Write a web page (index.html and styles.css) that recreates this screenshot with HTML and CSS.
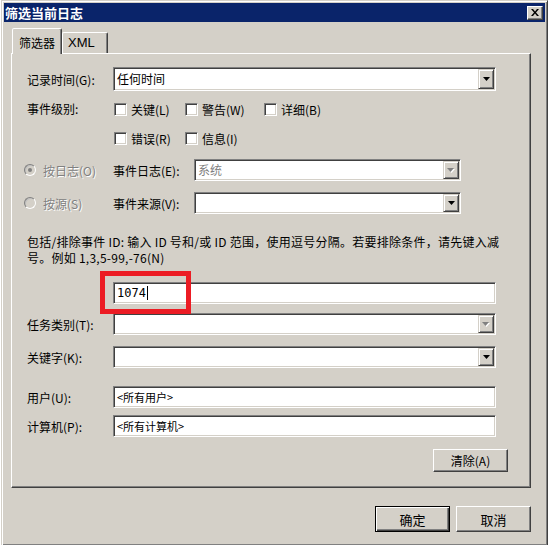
FILE: index.html
```html
<!DOCTYPE html>
<html lang="zh-CN">
<head>
<meta charset="UTF-8" />
<title>筛选当前日志</title>
<link rel="stylesheet" href="styles.css">
</head>
<body>

<div class="dialog">
  <!-- Title bar -->
  <div class="titlebar">
    <span class="title">筛选当前日志</span>
    <span class="close-btn">
      <svg width="8" height="7" viewBox="0 0 8 7"><path d="M0 0h2l2 2.5L6 0h2L5 3.5 8 7H6L4 4.5 2 7H0l3-3.5z" fill="#000"/></svg>
    </span>
  </div>

  <!-- Tabs -->
  <div class="tabs">
    <div class="tab active">筛选器</div>
    <div class="tab">XML</div>
  </div>

  <div class="panel">
    <div class="row row-time">
      <span class="lbl">记录时间(G):</span>
      <div class="field combo wide">
        <span class="val">任何时间</span>
        <span class="drop"><svg width="7" height="4" viewBox="0 0 7 4"><path d="M0 0h7L3.5 4z" fill="#000"/></svg></span>
      </div>
    </div>

    <div class="row row-level">
      <span class="lbl">事件级别:</span>
      <div class="checks">
        <span class="check"><i class="box"></i>关键(L)</span>
        <span class="check"><i class="box"></i>警告(W)</span>
        <span class="check"><i class="box"></i>详细(B)</span>
        <span class="check"><i class="box"></i>错误(R)</span>
        <span class="check"><i class="box"></i>信息(I)</span>
      </div>
    </div>

    <div class="row row-log">
      <span class="radio-wrap"><i class="radio checked"></i><span class="dim">按日志(O)</span></span>
      <span class="lbl2">事件日志(E):</span>
      <div class="field combo narrow">
        <span class="val dimval">系统</span>
        <span class="drop"><svg width="8" height="5" viewBox="0 0 8 5"><path d="M1 1h7L4.5 5z" fill="#fff"/><path d="M0 0h7L3.5 4z" fill="#808080"/></svg></span>
      </div>
    </div>

    <div class="row row-src">
      <span class="radio-wrap"><i class="radio"></i><span class="dim">按源(S)</span></span>
      <span class="lbl2">事件来源(V):</span>
      <div class="field combo narrow">
        <span class="val"></span>
        <span class="drop"><svg width="7" height="4" viewBox="0 0 7 4"><path d="M0 0h7L3.5 4z" fill="#000"/></svg></span>
      </div>
    </div>

    <p class="hint">包括/排除事件 ID: 输入 ID 号和/或 ID 范围，使用逗号分隔。若要排除条件，请先键入减<br>号。例如 1,3,5-99,-76(N)</p>

    <div class="row row-id">
      <span class="lbl"></span>
      <div class="field wide"><span class="val mono">1074<i class="caret"></i></span></div>
      <span class="mark"></span>
    </div>

    <div class="row row-task">
      <span class="lbl">任务类别(T):</span>
      <div class="field combo wide">
        <span class="val"></span>
        <span class="drop"><svg width="8" height="5" viewBox="0 0 8 5"><path d="M1 1h7L4.5 5z" fill="#fff"/><path d="M0 0h7L3.5 4z" fill="#808080"/></svg></span>
      </div>
    </div>

    <div class="row row-key">
      <span class="lbl">关键字(K):</span>
      <div class="field combo wide">
        <span class="val"></span>
        <span class="drop"><svg width="7" height="4" viewBox="0 0 7 4"><path d="M0 0h7L3.5 4z" fill="#000"/></svg></span>
      </div>
    </div>

    <div class="row row-user">
      <span class="lbl">用户(U):</span>
      <div class="field wide"><span class="val small">&lt;所有用户&gt;</span></div>
    </div>

    <div class="row row-pc">
      <span class="lbl">计算机(P):</span>
      <div class="field wide"><span class="val small">&lt;所有计算机&gt;</span></div>
    </div>

    <div class="row row-clear">
      <button class="btn clear">清除(A)</button>
    </div>
  </div>

  <div class="footer">
    <button class="btn default">确定</button>
    <button class="btn">取消</button>
  </div>
</div>

</body>
</html>
```

FILE: styles.css
```css
* {
  box-sizing: border-box;
  margin: 0;
  padding: 0;
}
body {
  background: #fff;
  font-family: "Noto Sans CJK SC", "Liberation Sans", sans-serif;
  font-size: 12px;
  color: #000;
  overflow: hidden;
}
.dialog {
  width: 547px;
  height: 546px;
  margin-left: 1px;
  background: #d4d0c8;
  border: 1px solid;
  border-color: #d4d0c8 #404040 #404040 #d4d0c8;
  box-shadow: inset 1px 1px #fff, inset -1px -1px #808080;
  padding: 2px;
}
.titlebar {
  height: 19px;
  background: #0a246a;
  display: flex;
  align-items: center;
  justify-content: space-between;
  padding: 0 2px 0 1px;
}
.title {
  color: #fff;
  font-weight: bold;
  font-size: 13px;
  line-height: 19px;
}
.close-btn {
  width: 16px;
  height: 14px;
  background: #d4d0c8;
  border: 1px solid;
  border-color: #fff #404040 #404040 #fff;
  box-shadow: inset -1px -1px #808080;
  display: flex;
  align-items: center;
  justify-content: center;
}
.tabs {
  display: flex;
  align-items: flex-end;
  padding: 6px 0 0 8px;
  height: 31px;
}
.tab {
  height: 21px;
  padding: 0 10px 0 5px;
  width: 46px;
  border: 1px solid;
  border-bottom: none;
  border-color: #fff #404040 transparent #fff;
  box-shadow: inset -1px 0 #808080;
  border-radius: 2px 2px 0 0;
  line-height: 19px;
  font-size: 13px;
  font-family: "Liberation Sans", sans-serif;
}
.tab.active {
  height: 26px;
  width: 50px;
  margin-bottom: -1px;
  background: #d4d0c8;
  position: relative;
  z-index: 1;
  padding: 4px 0 0 6px;
  font-family: "Noto Sans CJK SC", sans-serif;
  font-size: 12px;
}
.panel {
  margin-left: 7px;
  width: 520px;
  height: 435px;
  border: 1px solid;
  border-color: #fff #404040 #404040 #fff;
  box-shadow: inset -1px -1px #808080;
  padding: 13px 34px 0 15px;
}
.row {
  display: flex;
  align-items: center;
}
.lbl {
  width: 86px;
  flex: none;
}
.lbl2 {
  width: 81px;
  flex: none;
}
.field {
  height: 22px;
  background: #fff;
  border: 1px solid;
  border-color: #808080 #fff #fff #808080;
  box-shadow: inset 1px 1px #404040, inset -1px -1px #d4d0c8;
  padding: 1px;
  display: flex;
  align-items: center;
}
.wide {
  width: 383px;
}
.narrow {
  width: 267px;
}
.val {
  flex: 1;
  padding-left: 2px;
  line-height: 18px;
  white-space: nowrap;
}
.val.small {
  font-size: 11px;
}
.val.mono {
  font-family: "DejaVu Sans Mono", monospace;
  font-size: 12px;
  display: flex;
  align-items: center;
}
.caret {
  display: inline-block;
  width: 1px;
  height: 14px;
  background: #000;
  margin-left: 1px;
}
.dimval {
  color: #808080;
}
.drop {
  width: 16px;
  height: 100%;
  background: #d4d0c8;
  border: 1px solid;
  border-color: #d4d0c8 #404040 #404040 #d4d0c8;
  box-shadow: inset 1px 1px #fff, inset -1px -1px #808080;
  display: flex;
  align-items: center;
  justify-content: center;
  flex: none;
}
.row-time .field {
  height: 24px;
}
.row-level {
  margin-top: 10px;
  align-items: flex-start;
}
.row-level .lbl {
  line-height: 16px;
  margin-top: 0;
}
.checks {
  display: grid;
  grid-template-columns: 71px 79px auto;
  row-gap: 13px;
  margin-left: 1px;
}
.check {
  display: flex;
  align-items: center;
  height: 16px;
  gap: 4px;
}
.box {
  width: 13px;
  height: 13px;
  background: #fff;
  border: 1px solid;
  border-color: #808080 #fff #fff #808080;
  box-shadow: inset 1px 1px #404040, inset -1px -1px #d4d0c8;
}
.row-log {
  margin-top: 13px;
  margin-left: -3px;
}
.row-src {
  margin-top: 11px;
  margin-left: -3px;
}
.radio-wrap {
  width: 89px;
  flex: none;
  display: flex;
  align-items: center;
  gap: 7px;
}
.radio {
  width: 12px;
  height: 12px;
  border-radius: 50%;
  background: #d4d0c8;
  border: 1px solid;
  border-color: #808080 #fff #fff #808080;
  box-shadow: inset 1px 1px #c0c0c0;
  position: relative;
}
.radio.checked::after {
  content: "";
  position: absolute;
  left: 3px;
  top: 3px;
  width: 4px;
  height: 4px;
  border-radius: 50%;
  background: #808080;
}
.dim {
  color: #808080;
  text-shadow: 1px 1px #fff;
}
.hint {
  margin-top: 20px;
  line-height: 16px;
  white-space: nowrap;
  letter-spacing: 0.25px;
}
.row-id {
  margin-top: 16px;
  position: relative;
}
.mark {
  position: absolute;
  left: 73px;
  top: -11px;
  width: 91px;
  height: 43px;
  border: 5px solid #ec1c24;
}
.row-task {
  margin-top: 9px;
}
.row-key {
  margin-top: 11px;
}
.row-user {
  margin-top: 18px;
}
.row-pc {
  margin-top: 7px;
}
.row-clear {
  margin-top: 12px;
  justify-content: flex-end;
  margin-right: -12px;
}
.btn {
  font-family: "Noto Sans CJK SC", sans-serif;
  font-size: 12px;
  background: #d4d0c8;
  border: 1px solid;
  border-color: #fff #404040 #404040 #fff;
  box-shadow: inset -1px -1px #808080;
  width: 75px;
  height: 23px;
  color: #000;
}
.footer {
  display: flex;
  justify-content: flex-end;
  gap: 6px;
  margin-top: 18px;
  padding-right: 14px;
}
.footer .btn {
  height: 26px;
  font-size: 13px;
}
.btn.default {
  border: 1px solid #000;
  box-shadow: inset 1px 1px #fff, inset -1px -1px #404040, inset -2px -2px #808080;
}
```
